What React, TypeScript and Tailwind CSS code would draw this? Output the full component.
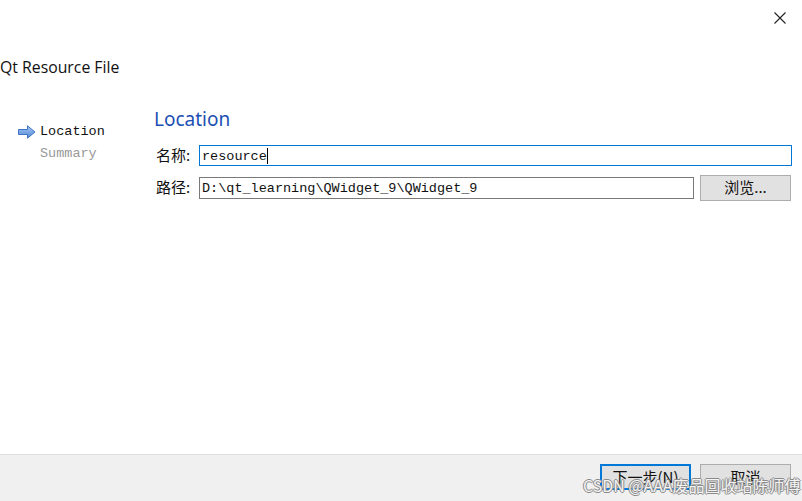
import React from "react";

const mono = "font-['Liberation_Mono','Noto_Sans_CJK_SC',monospace]";
const cjk = "font-['Noto_Sans_CJK_SC',sans-serif]";

const Arrow: React.FC = () => (
  <svg width="18" height="14" viewBox="0 0 18 14">
    <defs>
      <linearGradient id="ag" x1="0" y1="0" x2="0" y2="1">
        <stop offset="0" stopColor="#a9c9f2" />
        <stop offset="1" stopColor="#4f86d6" />
      </linearGradient>
    </defs>
    <path
      d="M0.5 4.5 H9.5 V0.8 L17 7 L9.5 13.2 V9.5 H0.5 Z"
      fill="url(#ag)"
      stroke="#3f73c4"
      strokeWidth="1"
      strokeLinejoin="round"
    />
  </svg>
);

const Row: React.FC<{ label: string; children: React.ReactNode }> = ({ label, children }) => (
  <div className="flex items-center">
    <span className={`${cjk} text-[15px] text-[#111] w-[45px] pl-[2px]`}>{label}</span>
    {children}
  </div>
);

export default function App() {
  return (
    <div className="w-[802px] h-[501px] bg-white flex flex-col font-['Open_Sans',sans-serif] relative overflow-hidden">
      {/* top bar */}
      <div className="h-[40px] flex justify-end items-start pt-[12px] pr-[16px]">
        <svg width="12" height="12" viewBox="0 0 12 12">
          <path d="M0.5 0.5 L11.5 11.5 M11.5 0.5 L0.5 11.5" stroke="#222" strokeWidth="1.1" />
        </svg>
      </div>

      {/* title */}
      <div className="h-[58px] pt-[16px] text-[15.8px] text-[#111]">Qt Resource File</div>

      {/* body */}
      <div className="flex flex-1">
        <div className="w-[154px] pl-[18px] pt-[24px]">
          <div className={`flex items-center gap-[4px] ${mono} text-[13.5px] text-[#111]`}>
            <Arrow />
            <span>Location</span>
          </div>
          <div className={`pl-[22px] mt-[2px] ${mono} text-[13.5px] text-[#999]`}>Summary</div>
        </div>

        <div className="flex-1 pr-[10px] pt-[8px]">
          <div className="text-[19px] text-[#1c4fb3] leading-[26px] mb-[12px] font-['Noto_Sans',sans-serif]">Location</div>
          <div className="flex flex-col gap-[8px]">
            <Row label="名称:">
              <div className={`flex-1 h-[21px] border border-[#0078d7] flex items-start pt-[3px] pl-[2px] leading-[16px] ${mono} text-[13.5px] text-[#111]`}>
                resource<span className="w-px h-[16px] -mt-[1px] bg-black" />
              </div>
            </Row>
            <Row label="路径:">
              <div className={`w-[495px] h-[22px] border border-[#7a7a7a] flex items-start pt-[2px] pl-[2px] leading-[17px] ${mono} text-[13.5px] text-[#111]`}>
                D:\qt_learning\QWidget_9\QWidget_9
              </div>
              <div className={`ml-[6px] w-[91px] h-[26px] border border-[#adadad] bg-[#e1e1e1] flex items-center justify-center ${cjk} text-[15px] text-[#111]`}>
                浏览...
              </div>
            </Row>
          </div>
        </div>
      </div>

      {/* footer */}
      <div className="h-[47px] bg-[#f0f0f0] border-t border-[#dfdfdf] flex justify-end items-start pt-[9px] pr-[11px] gap-[9px]">
        <div className={`w-[91px] h-[26px] border-2 border-[#0078d7] bg-[#e1e1e1] flex items-center justify-center ${cjk} text-[15px] text-[#111]`}>
          下一步(N)
        </div>
        <div className={`w-[91px] h-[26px] border border-[#adadad] bg-[#e1e1e1] flex items-center justify-center ${cjk} text-[15px] text-[#111]`}>
          取消
        </div>
      </div>

      {/* watermark */}
      <div className={`absolute left-[583px] top-[473px] ${cjk} text-[16px] text-white/90 [text-shadow:1px_0_0_#8a8a8a,-1px_0_0_#8a8a8a,0_1px_0_#8a8a8a,0_-1px_0_#8a8a8a]`}>
        CSDN @AAA废品回收站陈师傅
      </div>
    </div>
  );
}
